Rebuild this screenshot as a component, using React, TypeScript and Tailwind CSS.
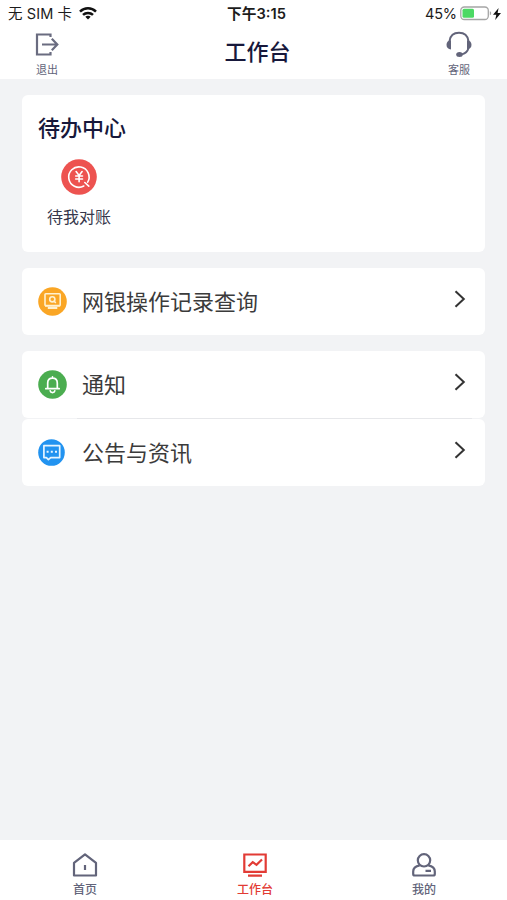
import type { ReactNode } from "react";

function StatusBar() {
  return (
    <div className="relative flex h-[27px] items-center justify-between pl-[8px] pr-[6px] pt-px text-[14.5px] leading-none text-[#1c1c1c]">
      <div className="flex items-center gap-[7px]">
        <span className="whitespace-pre tracking-[0.1px]">无 SIM 卡</span>
        <svg className="mb-[2px]" width="18" height="13" viewBox="0 0 18 13" fill="none" stroke="#111" strokeWidth="2.5">
          <path d="M1 4.6C5.5.2 12.500.2 17 4.600" />
          <path d="M4 7.900c2.800-2.700 7.200-2.700 10 0" />
          <path d="M6.300 9.800c1.600-1.400 3.800-1.400 5.400 0L9 12.500z" fill="#111" stroke="none" />
        </svg>
      </div>
      <span className="absolute left-1/2 -translate-x-1/2 whitespace-nowrap pl-[6px] text-[14.700px] font-semibold">下午3:15</span>
      <div className="flex items-center">
        <span className="mr-[3px] tracking-[-0.1px]">45%</span>
        <svg className="mb-px" width="32" height="15" viewBox="0 0 32 15" fill="none">
          <rect x=".8" y="1" width="27.500" height="12.500" rx="3.500" stroke="#a5a5a5" strokeWidth="1.300" />
          <rect x="2.500" y="2.800" width="11.500" height="9" rx="1.500" fill="#4cd964" />
          <path d="M29.800 5.200c1.800.4 1.800 3.700 0 4.100z" fill="#a5a5a5" />
        </svg>
        <svg className="mb-px ml-px" width="8" height="12" viewBox="0 0 8 12" fill="#111">
          <path d="M5.600 0 0 6.800h3.300L2.200 12 8 4.900H4.600z" />
        </svg>
      </div>
    </div>
  );
}

function NavBar() {
  return (
    <div className="grid h-[52px] grid-cols-[94px_1fr_96px] text-[#62647a]">
      <div className="flex flex-col items-center pt-[6px]">
        <svg width="24" height="23" viewBox="0 0 24 23" fill="none" stroke="#6a6c80" strokeWidth="2.200">
          <path d="M15.500 4V1.500H2v20h13.500V19M7 11.500h15M16.800 5.800l5.500 5.700-5.500 5.700" />
        </svg>
        <span className="mt-[7px] text-[11px] leading-[14px]">退出</span>
      </div>
      <h1 className="pl-[10px] pt-[8px] text-center text-[22px] font-medium leading-[34px] text-[#17183b]">工作台</h1>
      <div className="flex flex-col items-center pt-[4px]">
        <svg width="26" height="27" viewBox="0 0 26 27" fill="none" stroke="#62647a" strokeWidth="1.900">
          <path d="M3.500 10C4.300 4.800 8 1.800 13 1.800S21.700 4.800 22.500 10M22.500 17c-.8 3.300-3.300 5.500-6.500 6.300" />
          <path d="M5 9.200v9.300C2.200 18.500.5 16.500.5 13.800S2.200 9.200 5 9.200zM21 9.200v9.300c2.800 0 4.500-2 4.500-4.700s-1.700-4.600-4.500-4.600z" fill="#62647a" stroke="none" />
          <ellipse cx="13.500" cy="23.600" rx="3.300" ry="2.500" fill="#62647a" stroke="none" />
        </svg>
        <span className="mt-[5px] text-[11px] leading-[14px]">客服</span>
      </div>
    </div>
  );
}

function ReconcileIcon() {
  return (
    <svg width="36" height="36" viewBox="0 0 36 36" fill="none">
      <circle cx="18" cy="18" r="17.800" fill="#ed5350" />
      <g stroke="#fff" strokeLinecap="round" strokeWidth="1.600">
        <path d="M22.800 27A10.200 10.200 0 1 1 26.700 23.200M23.800 23.500l4 3.700" />
        <path d="M15.100 12.600l3 3.900 3-3.900M18.100 16.500v6.200M14.700 17h6.800M14.700 20h6.800" />
      </g>
    </svg>
  );
}

function RecordIcon() {
  return (
    <svg width="29" height="29" viewBox="0 0 29 29" fill="none">
      <circle cx="14.500" cy="14.500" r="14.300" fill="#faa625" />
      <g stroke="#fff1d0" strokeWidth="1.600">
        <rect x="7" y="6.700" width="15.200" height="11.800" rx=".8" />
        <circle cx="14.300" cy="12.300" r="2.600" />
        <path d="M16 14l1.800 2M7 19h15.200" />
        <path d="M9.800 21h9.500" strokeWidth="2" />
      </g>
    </svg>
  );
}

function BellIcon() {
  return (
    <svg width="29" height="29" viewBox="0 0 29 29" fill="none">
      <circle cx="14.500" cy="14.500" r="14.300" fill="#4bad50" />
      <g stroke="#fff" strokeWidth="1.700" strokeLinecap="round" strokeLinejoin="round">
        <path d="M7.800 18.700h13.400M9.700 18.500v-5.400c0-3 2-5 4.800-5s4.800 2 4.800 5v5.400M14.500 7.800V6.900" />
        <path d="M12.200 20.900c.5 2.200 4.100 2.200 4.600 0" />
      </g>
    </svg>
  );
}

function MessageIcon() {
  return (
    <svg width="27" height="27" viewBox="0 0 27 27" fill="none">
      <circle cx="13.500" cy="13.500" r="13.300" fill="#2293f0" />
      <path d="M5.900 6.700h15.800v11.900h-9l-2.300 2-2-2H5.900z" stroke="#e6f5ff" strokeWidth="1.700" strokeLinejoin="round" />
      <path d="M8.600 12.700h2M12.800 12.700h2M17 12.700h2" stroke="#e6f5ff" strokeWidth="2" />
    </svg>
  );
}

interface MenuRowProps {
  icon: ReactNode;
  label: string;
}

function MenuRow({ icon, label }: MenuRowProps) {
  return (
    <div className="flex h-[67px] items-center rounded-[6px] bg-white pl-4 pr-[19px]">
      <div className="flex w-[44px] shrink-0">{icon}</div>
      <span className="flex-1 text-[22px] leading-[32px] text-[#3b3b3b]">{label}</span>
      <svg className="mb-[6px]" width="12" height="18" viewBox="0 0 12 18" fill="none" stroke="#333" strokeWidth="2">
        <path d="M1.500 1.200 9.800 9l-8.300 7.800" />
      </svg>
    </div>
  );
}

function HomeIcon() {
  return (
    <svg width="26" height="24" viewBox="0 0 26 24" fill="none" stroke="#62647a" strokeWidth="2.200" strokeLinejoin="round">
      <path d="M2 9.800 13 1.300l11 8.500v12.700H2zM13 12v5" />
    </svg>
  );
}

function WorkbenchIcon() {
  return (
    <svg width="26" height="24" viewBox="0 0 26 24" fill="none" stroke="#e23b35" strokeWidth="2.200">
      <path d="M2.300 1.500h21.400v17.300H2.300zM6 22.700h14" />
      <path d="M6.500 13.200l4.200-4.100 3.800 2.700 5.500-5.300" />
    </svg>
  );
}

function MineIcon() {
  return (
    <svg width="26" height="24" viewBox="0 0 26 24" fill="none" stroke="#62647a" strokeWidth="2.200" strokeLinejoin="round">
      <circle cx="13" cy="7.300" r="6.200" />
      <path d="M8.700 12.300C4.800 13 2.200 15.300 2.200 18.500v2.500q0 1.500 1.500 1.500h18.600q1.500 0 1.500-1.500v-2.500c0-3.200-2.600-5.500-6.500-6.200M14.500 17.800h5.500" />
    </svg>
  );
}

interface TabProps {
  icon: ReactNode;
  label: string;
  active?: boolean;
}

function Tab({ icon, label, active }: TabProps) {
  return (
    <div className={`flex flex-col items-center pt-[13px] ${active ? "text-[#e23b35]" : "text-[#62647a]"}`}>
      {icon}
      <span className="mt-[5px] text-[12px] font-medium leading-[16px]">{label}</span>
    </div>
  );
}

export default function App() {
  return (
    <div className="flex h-[900px] w-[507px] flex-col overflow-hidden bg-[#f2f3f5] font-[Inter,'Noto_Sans_CJK_SC',sans-serif]">
      <header className="bg-white">
        <StatusBar />
        <NavBar />
      </header>

      <main className="flex-1 px-[22px] pt-4">
        <section className="h-[157px] rounded-[6px] bg-white pl-4 pt-[17px]">
          <h2 className="text-[22px] font-medium leading-[32px] text-[#17183b]">待办中心</h2>
          <div className="mt-[15px] flex w-[82px] flex-col items-center">
            <ReconcileIcon />
            <span className="mt-[11px] text-[16px] leading-[22px] text-[#35374b]">待我对账</span>
          </div>
        </section>

        <section className="mt-4">
          <MenuRow icon={<RecordIcon />} label="网银操作记录查询" />
        </section>

        <section className="mt-4">
          <MenuRow icon={<BellIcon />} label="通知" />
          <div className="ml-[55px] mr-[13px] h-px bg-[#e6e7ea]" />
          <MenuRow icon={<MessageIcon />} label="公告与资讯" />
        </section>
      </main>

      <nav className="grid h-[60px] grid-cols-[170px_170px_168px] bg-white">
        <Tab icon={<HomeIcon />} label="首页" />
        <Tab icon={<WorkbenchIcon />} label="工作台" active />
        <Tab icon={<MineIcon />} label="我的" />
      </nav>
    </div>
  );
}
